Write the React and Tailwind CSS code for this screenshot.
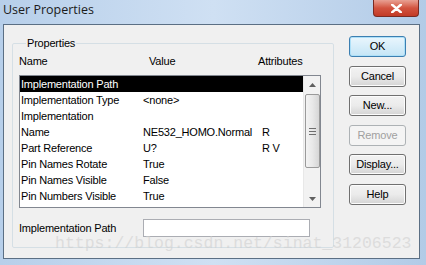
import React from 'react'

const rows = [
  ['Implementation Path', '', ''],
  ['Implementation Type', '<none>', ''],
  ['Implementation', '', ''],
  ['Name', 'NE532_HOMO.Normal', 'R'],
  ['Part Reference', 'U?', 'R V'],
  ['Pin Names Rotate', 'True', ''],
  ['Pin Names Visible', 'False', ''],
  ['Pin Numbers Visible', 'True', ''],
]

const buttons = [
  { label: 'OK', kind: 'default' },
  { label: 'Cancel' },
  { label: 'New...' },
  { label: 'Remove', kind: 'disabled' },
  { label: 'Display...' },
  { label: 'Help' },
]

const Button = ({ label, kind }) => {
  if (kind === 'default') {
    return (
      <div className="w-[57px] h-[21px] rounded-[3px] border border-[#3c7fb1] bg-gradient-to-b from-[#eaf6fd] to-[#c4e5f6] shadow-[inset_0_0_0_1px_#aee0f8] flex items-center justify-center text-black">
        {label}
      </div>
    )
  }
  if (kind === 'disabled') {
    return (
      <div className="w-[57px] h-[21px] rounded-[3px] border border-[#adb2b5] bg-[#f4f4f4] flex items-center justify-center text-[#a0a0a0]">
        {label}
      </div>
    )
  }
  return (
    <div className="w-[57px] h-[21px] rounded-[3px] border border-[#707070] bg-gradient-to-b from-[#f2f2f2] via-[#ebebeb] to-[#d4d4d4] shadow-[inset_0_0_0_1px_#fcfcfc] flex items-center justify-center text-black">
      {label}
    </div>
  )
}

const ScrollBar = () => (
  <div className="w-[17px] h-full bg-[#f2f2f2] border-l border-[#e8e8e8] flex flex-col items-center">
    <div className="h-[17px] w-full flex items-center justify-center">
      <svg width="7" height="4" viewBox="0 0 7 4"><path d="M0 4 L3.5 0 L7 4 Z" fill="#606060" /></svg>
    </div>
    <div className="w-[15px] h-[74px] mt-[1px] rounded-[2px] border border-[#9a9a9a] bg-gradient-to-r from-[#f3f3f3] via-[#e8e8e8] to-[#d6d6d6] flex flex-col items-center justify-center gap-[2px]">
      <div className="w-[7px] h-[1px] bg-[#6e6e6e]" />
      <div className="w-[7px] h-[1px] bg-[#6e6e6e]" />
      <div className="w-[7px] h-[1px] bg-[#6e6e6e]" />
    </div>
    <div className="flex-1" />
    <div className="h-[17px] w-full flex items-center justify-center">
      <svg width="7" height="4" viewBox="0 0 7 4"><path d="M0 0 L3.5 4 L7 0 Z" fill="#606060" /></svg>
    </div>
  </div>
)

export default function App() {
  return (
    <div className="relative w-[426px] h-[265px] overflow-hidden bg-gradient-to-r from-[#b7cfea] via-[#cfe0f3] to-[#b2cbe7] font-['Liberation_Sans',Arial,sans-serif] text-[11px] tracking-[-0.2px] text-black">
      {/* title bar */}
      <div className="h-[24px] flex items-start justify-between pl-[3px] pr-[7px]">
        <span className="mt-[1px] text-[12.5px] tracking-normal font-['Open_Sans',sans-serif] text-[#1b1b1b]">User Properties</span>
        <div className="w-[46px] h-[17px] rounded-b-[4px] border border-t-0 border-[#7a2a22] bg-gradient-to-b from-[#e8a093] via-[#d2533f] to-[#c23a26] flex items-center justify-center">
          <svg width="11" height="9" viewBox="0 0 11 9">
            <path d="M1 0.5 L10 8.5 M10 0.5 L1 8.5" stroke="#ffffff" strokeWidth="2.4" strokeLinecap="round" />
          </svg>
        </div>
      </div>

      {/* dialog body */}
      <div className="ml-[3px] w-[417px] h-[235px] border border-[#5b6f84] bg-[#f0f0f0] flex items-start pl-[8px] pt-[11px]">
        <fieldset className="mt-[1px] w-[322px] h-[211px] border border-[#d5dfe5] rounded-[2px] px-[6px]">
          <legend className="ml-[7px] px-[1px] leading-[13px]">Properties</legend>
          <div className="grid grid-cols-[130px_109px_1fr] h-[14px] items-center mt-[3px]">
            <span>Name</span>
            <span>Value</span>
            <span>Attributes</span>
          </div>
          <div className="mt-[8px] w-[302px] h-[133px] border border-[#828790] bg-white flex">
            <div className="w-[283px]">
              {rows.map(([name, value, attr], i) => (
                <div
                  key={name}
                  className={`h-[16px] grid grid-cols-[122px_119px_1fr] items-center pl-[1px] ${i === 0 ? 'bg-black text-white' : ''}`}
                >
                  <span>{name}</span>
                  <span>{value}</span>
                  <span>{attr}</span>
                </div>
              ))}
            </div>
            <ScrollBar />
          </div>
          <div className="mt-[11px] flex items-center">
            <span className="w-[124px]">Implementation Path</span>
            <div className="w-[167px] h-[18px] border border-[#abadb3] bg-white" />
          </div>
        </fieldset>

        <div className="ml-[15px] flex flex-col gap-[8.5px]">
          {buttons.map((b) => (
            <Button key={b.label} {...b} />
          ))}
        </div>
      </div>

      {/* watermark */}
      <div className="absolute left-[55px] top-[235px] text-[16.5px] tracking-normal leading-[18px] font-['Liberation_Mono',monospace] text-[#cfcfcf]/60 pointer-events-none">
        https://blog.csdn.net/sinat_31206523
      </div>
    </div>
  )
}
